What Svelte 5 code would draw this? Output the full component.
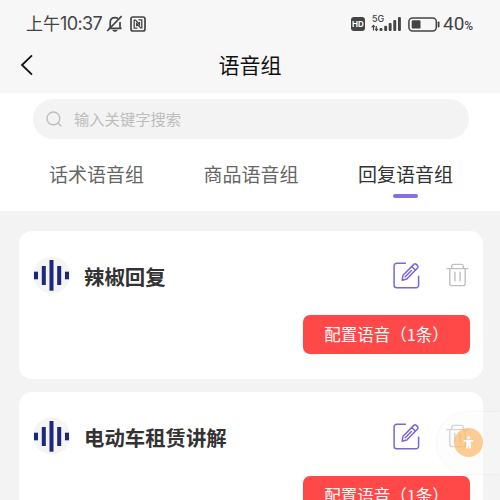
<script lang="ts">
  interface VoiceGroup {
    name: string;
    count: number;
  }

  const tabs = ["话术语音组", "商品语音组", "回复语音组"];
  const groups: VoiceGroup[] = [
    { name: "辣椒回复", count: 1 },
    { name: "电动车租赁讲解", count: 1 },
  ];

  let activeTab = $state(2);
  let keyword = $state("");
</script>

<div class="screen">
  <header class="top">
    <div class="status">
      <span class="status__time">上午<span class="status__digits">10:37</span></span>
      <svg class="status__bell" width="18" height="18" viewBox="0 0 18 18" fill="none" stroke="#444" stroke-width="1.7">
        <path d="M2.6 13.3h13M4.2 13V7.6C4.2 4.8 6 2.7 9 2.7c1.2 0 2.2.3 3 1M14 7v6" />
        <path d="M1.2 16 15.6 1.2" />
        <path d="M6.7 15.3c1 1.3 3.6 1.3 4.6 0z" fill="#444" stroke-width="1" />
      </svg>
      <svg class="status__nfc" width="16" height="16" viewBox="0 0 16 16" fill="none" stroke="#444">
        <rect x="1" y="1" width="14" height="14" rx="2" stroke-width="1.7" />
        <path d="M7.4 12.2H4.2V4.1h1.4l3.9 4.4V6M8.4 3.9h3.4v8h-1.2L6.6 7.6v2.6" stroke-width="1.3" />
      </svg>

      <div class="status__spacer"></div>

      <span class="status__hd">HD</span>
      <div class="status__net">
        <span class="status__5g">5G</span>
        <svg width="31" height="16" viewBox="0 0 31 16" fill="#444">
          <path d="M2.5 9.5v5M.7 11.4l1.8-2 1.2 1.6M5.3 10v4.6M4.2 12.8l1.3 1.8 1.3-1.8" fill="none" stroke="#444" stroke-width="1.2" />
          <rect x="8.5" y="12" width="3" height="3" rx="1" />
          <rect x="13.2" y="9.7" width="2.9" height="5.3" rx="1" />
          <rect x="17.7" y="7" width="2.9" height="8" rx="1" />
          <rect x="22.3" y="4" width="2.9" height="11" rx="1" />
          <rect x="27" y="1" width="2.9" height="14" rx="1" />
        </svg>
      </div>
      <svg class="status__battery" width="32" height="15" viewBox="0 0 32 15" fill="none">
        <rect x=".9" y=".9" width="27.4" height="13" rx="3.6" stroke="#444" stroke-width="1.5" />
        <rect x="3.7" y="3.2" width="8.8" height="8.4" rx="1.2" fill="#444" />
        <path d="M30.6 5.3v4.2" stroke="#444" stroke-width="1.8" stroke-linecap="round" />
      </svg>
      <span class="status__percent">40<small>%</small></span>
    </div>

    <div class="nav">
      <button class="nav__back" type="button" aria-label="返回">
        <svg width="14" height="24" viewBox="0 0 14 24" fill="none">
          <path d="M12 2.3 2 12l10 9.7" stroke="#111" stroke-width="1.8" />
        </svg>
      </button>
      <h1 class="nav__title">语音组</h1>
    </div>
  </header>

  <section class="filters">
    <label class="search">
      <svg width="17" height="17" viewBox="0 0 17 17" fill="none" stroke="#bdbdbd" stroke-width="1.4" stroke-linecap="round">
        <circle cx="7.4" cy="7.4" r="6.4" />
        <path d="m12 12 3 3" />
      </svg>
      <input class="search__input" type="text" placeholder="输入关键字搜索" bind:value={keyword} />
    </label>

    <div class="tabs" role="tablist">
      {#each tabs as tab, i}
        <button
          class="tabs__item"
          class:tabs__item--active={i === activeTab}
          type="button"
          role="tab"
          aria-selected={i === activeTab}
          onclick={() => (activeTab = i)}
        >
          {tab}
        </button>
      {/each}
    </div>
  </section>

  <main class="list">
    {#each groups as group}
      <article class="card">
        <div class="card__head">
          <svg class="card__wave" width="38" height="38" viewBox="0 0 38 38">
            <circle cx="18.7" cy="19" r="18.5" fill="#f4f4f4" />
            <g fill="#1d277c">
              <rect x="1" y="15.7" width="4" height="7.6" />
              <rect x="8.8" y="10" width="4" height="19" />
              <rect x="16.5" y="4" width="4" height="30.7" />
              <rect x="24.2" y="10" width="4" height="19" />
              <rect x="32" y="15.7" width="4" height="7.6" />
            </g>
          </svg>
          <h2 class="card__name">{group.name}</h2>
          <button class="card__action" type="button" aria-label="编辑">
            <svg width="27" height="27" viewBox="0 0 27 27" fill="none" stroke="#7867d8" stroke-width="1.5" stroke-linecap="round" stroke-linejoin="round">
              <path d="M12.4 1.3H3.6a2.5 2.5 0 0 0-2.5 2.5v19.5a2.5 2.5 0 0 0 2.5 2.5h19.5a2.5 2.5 0 0 0 2.5-2.5v-9" />
              <path d="M9.2 18.2 10 13.3 20.8 2.4a1.8 1.8 0 0 1 2.5 0l1.2 1.2a1.8 1.8 0 0 1 0 2.5L13.8 17.1zM18.8 4.5l3.7 3.7M12.2 14.8l6.2-6.3" />
            </svg>
          </button>
          <button class="card__action" type="button" aria-label="删除">
            <svg width="23" height="24" viewBox="0 0 23 24" fill="none" stroke="#c0c0c0" stroke-width="1.4" stroke-linecap="round">
              <path d="M1 5.6h21M5.7 5.4V3.2c0-1 .7-1.8 1.7-1.8h8.2c1 0 1.7.8 1.7 1.8v2.2" />
              <path d="M3.8 5.8v14.6c0 1.3.9 2.2 2.2 2.2h11c1.3 0 2.2-.9 2.2-2.2V5.8M8.9 9.2v8.7M14.1 9.2v8.7" />
            </svg>
          </button>
        </div>
        <button class="card__config" type="button">配置语音（{group.count}条）</button>
      </article>
    {/each}
  </main>

  <button class="assist" type="button" aria-label="辅助功能">
    <span class="assist__dot">
      <svg width="11" height="13" viewBox="0 0 11 13" fill="#fff">
        <circle cx="5.5" cy="1.7" r="1.6" />
        <path d="M.7 4.1h9.6v1.6H7.5l.5 6.8H6.2L5.5 9l-.7 3.5H3l.5-6.8H.7z" />
      </svg>
    </span>
  </button>
</div>

<style>
  :global(body) {
    overflow: hidden;
    background: #f3f3f3;
  }

  .screen {
    position: relative;
    width: 500px;
    height: 500px;
    overflow: hidden;
    background: #f3f3f3;
    color: #333;
    font-family: "Noto Sans CJK SC", "Noto Sans", sans-serif;
  }

  button {
    padding: 0;
    border: 0;
    background: none;
    color: inherit;
    font: inherit;
    cursor: pointer;
  }

  svg {
    display: block;
    flex: none;
  }

  .top {
    height: 93px;
    background: #f7f7f7;
  }

  .status {
    display: flex;
    align-items: center;
    height: 48px;
    padding: 0 26px;
    color: #444;
  }

  .status__time {
    width: 80px;
    margin-top: -2px;
    font-size: 17px;
    line-height: 24px;
    white-space: nowrap;
  }

  .status__digits {
    font-family: Inter, sans-serif;
    font-size: 18px;
    letter-spacing: -0.6px;
  }

  .status__nfc {
    margin-left: 6px;
  }

  .status__spacer {
    flex: 1;
  }

  .status__hd {
    width: 14px;
    height: 14px;
    border-radius: 3px;
    background: #444;
    color: #fff;
    font: bold 8px/14px Inter, sans-serif;
    text-align: center;
  }

  .status__net {
    position: relative;
    margin-left: 6px;
  }

  .status__5g {
    position: absolute;
    top: -2px;
    left: 1px;
    font: 500 9px/9px Inter, sans-serif;
  }

  .status__battery {
    margin-left: 6px;
  }

  .status__percent {
    width: 31px;
    margin: 2px 0 0 3px;
    font: 400 19px/24px Roboto, sans-serif;
    white-space: nowrap;
  }

  .status__percent small {
    font-size: 12px;
    font-weight: 500;
  }

  .nav {
    display: grid;
    grid-template-columns: 40px 1fr 40px;
    align-items: center;
    height: 34px;
  }

  .nav__back {
    padding-left: 20px;
  }

  .nav__title {
    margin: -2px 0 0;
    color: #111;
    font-size: 21px;
    font-weight: 400;
    line-height: 34px;
    text-align: center;
  }

  .filters {
    height: 112px;
    padding: 6px 31px 0 33px;
    background: #fff;
  }

  .search {
    display: flex;
    align-items: center;
    gap: 11px;
    height: 40px;
    padding: 0 13px;
    border-radius: 20px;
    background: #f3f3f3;
  }

  .search__input {
    flex: 1;
    padding: 0 0 2px;
    border: 0;
    outline: 0;
    background: none;
    font: inherit;
    font-size: 15.3px;
  }

  .search__input::placeholder {
    color: #bdbdbd;
  }

  .tabs {
    display: flex;
    justify-content: space-between;
    padding: 20px 16px 0;
  }

  .tabs__item {
    color: #666;
    font-size: 19px;
    line-height: 30px;
  }

  .tabs__item::after {
    content: "";
    display: block;
    width: 25px;
    height: 4px;
    margin: 5px auto 0;
    border-radius: 2px;
  }

  .tabs__item--active {
    color: #333;
  }

  .tabs__item--active::after {
    background: #8470e6;
  }

  .list {
    display: flex;
    flex-direction: column;
    gap: 13px;
    padding: 20px 17px 0 19px;
  }

  .card {
    display: flex;
    flex-direction: column;
    flex: none;
    height: 148px;
    padding: 25px 13px 0 14px;
    box-sizing: border-box;
    border-radius: 13px;
    background: #fff;
  }

  .card__head {
    display: flex;
    align-items: center;
    height: 38px;
  }

  .card__name {
    flex: 1;
    margin: 2px 0 0 13px;
    font-size: 20.4px;
    font-weight: 700;
    line-height: 30px;
  }

  .card__action + .card__action {
    margin: 0 1px 0 26px;
  }

  .card__config {
    align-self: flex-end;
    width: 167px;
    height: 39px;
    margin-top: 21px;
    border-radius: 7px;
    background: #ff4848;
    color: #fff;
    font-size: 16.5px;
    line-height: 39px;
  }

  .assist {
    position: absolute;
    top: 412px;
    right: 0;
    display: flex;
    align-items: center;
    width: 63px;
    height: 62px;
    padding-left: 17px;
    border-radius: 31px 0 0 31px;
    background: rgba(250, 250, 250, 0.35);
    box-shadow: 0 0 3px rgba(0, 0, 0, 0.07);
  }

  .assist__dot {
    display: flex;
    align-items: center;
    justify-content: center;
    width: 29px;
    height: 29px;
    margin-top: -1px;
    border-radius: 50%;
    background: rgba(252, 184, 104, 0.72);
  }
</style>
